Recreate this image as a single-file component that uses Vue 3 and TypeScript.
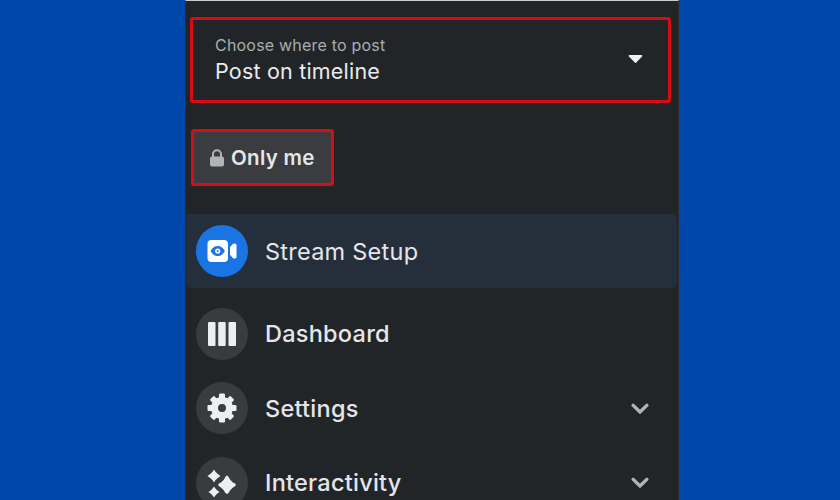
<script setup lang="ts">
interface Item { label: string; icon: string; chevron: boolean; active?: boolean }
const items: Item[] = [
  { label: 'Stream Setup', icon: 'video', chevron: false, active: true },
  { label: 'Dashboard', icon: 'bars', chevron: false },
  { label: 'Settings', icon: 'gear', chevron: true },
  { label: 'Interactivity', icon: 'spark', chevron: true },
]
const gearTeeth = [0, 45, 90, 135, 180, 225, 270, 315]
</script>

<template>
  <div class="page">
    <main class="panel">
      <section class="picker">
        <div>
          <div class="picker-label">Choose where to post</div>
          <div class="picker-value">Post on timeline</div>
        </div>
        <svg class="caret" width="15" height="10" viewBox="0 0 15 10">
          <path d="M1.6 1h11.8c.9 0 1.3 1 .7 1.6L8.3 8.6c-.4.4-1.1.4-1.5 0L.9 2.6C.3 2 .7 1 1.6 1z" fill="#f0f1f3" />
        </svg>
      </section>

      <div class="privacy">
        <svg width="16" height="18" viewBox="0 0 16 18">
          <path d="M4 8V5.2a4 4 0 0 1 8 0V8" fill="none" stroke="#b0b3b8" stroke-width="2" />
          <rect x="1" y="7.5" width="14" height="10" rx="2" fill="#b0b3b8" />
        </svg>
        <span>Only me</span>
      </div>

      <nav class="menu">
        <div v-for="item in items" :key="item.label" class="row" :class="{ active: item.active }">
          <span class="circle">
            <svg v-if="item.icon === 'video'" width="30" height="24" viewBox="0 0 30 24">
              <rect x="0.500" y="1" width="20.500" height="22" rx="4" fill="#fff" />
              <path d="M3.500 12c2-3.500 4.200-5 7.200-5s5.200 1.500 7.200 5c-2 3.500-4.200 5-7.200 5s-5.200-1.500-7.200-5z" fill="#1b74e4" />
              <circle cx="10.700" cy="12" r="2.600" fill="#fff" />
              <circle cx="10.700" cy="12" r="1" fill="#1b74e4" />
              <path d="M23 8.200l2.800-3.100c1-1.100 3.700-.8 3.700 1v11.800c0 1.800-2.700 2.100-3.700 1L23 15.800z" fill="#fff" />
            </svg>
            <svg v-else-if="item.icon === 'bars'" width="30" height="24" viewBox="0 0 30 24">
              <rect x="1" width="7.500" height="24" rx="1" fill="#eceef0" />
              <rect x="11.200" width="7.500" height="24" rx="1" fill="#eceef0" />
              <rect x="21.500" width="7.500" height="24" rx="1" fill="#eceef0" />
            </svg>
            <svg v-else-if="item.icon === 'gear'" width="30" height="30" viewBox="0 0 30 30">
              <rect v-for="a in gearTeeth" :key="a" x="12" y="0.500" width="6" height="6" rx="1.200" fill="#eceef0" :transform="`rotate(${a} 15 15)`" />
              <circle cx="15" cy="15" r="7.500" fill="none" stroke="#eceef0" stroke-width="7" />
            </svg>
            <svg v-else width="30" height="30" viewBox="0 0 30 30">
              <path d="M20 7.500c.8.600 1.300 1 1.900 1.900 1.400 2.800 3.200 4.600 6.100 6.200 1 .7 1 2 0 2.700-2.900 1.600-4.700 3.400-6.100 6.200-.6.900-1.100 1.300-1.900 1.300s-1.300-.4-1.900-1.300c-1.400-2.800-3.200-4.600-6.100-6.200-1-.7-1-2 0-2.700 2.900-1.600 4.700-3.400 6.100-6.200.6-.9 1.100-1.900 1.900-1.900z" fill="#eceef0" />
              <path d="M7 1.500c1.500 2.700 3.500 4.700 6.500 6.500-3 1.800-5 3.800-6.500 6.500C5.500 11.800 3.500 9.800.5 8 3.500 6.200 5.500 4.200 7 1.500z" fill="#eceef0" />
              <path d="M7 18.500c1.300 2.300 3 3.900 5.500 5.500-2.500 1.600-4.200 3.200-5.500 5.500-1.300-2.300-3-3.900-5.500-5.500 2.500-1.600 4.200-3.200 5.500-5.500z" fill="#eceef0" />
            </svg>
          </span>
          <span class="label">{{ item.label }}</span>
          <svg v-if="item.chevron" class="chevron" width="18" height="12" viewBox="0 0 18 12">
            <path d="M2.200 2.400 9 9l6.800-6.600" fill="none" stroke="#b0b3b8" stroke-width="3.400" stroke-linecap="round" stroke-linejoin="round" />
          </svg>
        </div>
      </nav>
    </main>
  </div>
</template>

<style scoped>
.page {
  box-sizing: border-box;
  width: 840px;
  height: 500px;
  padding-left: 185px;
  overflow: hidden;
  background: #0047ab;
  font-family: Inter, Roboto, "Liberation Sans", sans-serif;
  display: flex;
}
.panel {
  box-sizing: border-box;
  width: 494px;
  height: 500px;
  padding: 17px 2px 0 4px;
  background: #222527;
  border-top: 1px solid #c9cccf;
  border-left: 1px solid #2f2b2a;
  border-right: 1px solid #2f2b2a;
  overflow: hidden;
}
.picker {
  box-sizing: border-box;
  width: 481px;
  height: 86px;
  margin-top: -1px;
  padding: 0 25px 0 22px;
  border: 3px solid #d70c14;
  border-radius: 3px;
  display: flex;
  align-items: center;
  justify-content: space-between;
}
.picker-label {
  font-size: 16px;
  line-height: 21px;
  margin-bottom: 1px;
  color: #a9adb2;
  letter-spacing: 0.2px;
}
.picker-value {
  font-size: 21.500px;
  line-height: 28px;
  color: #e8eaed;
  letter-spacing: 0.2px;
}
.caret {
  margin-bottom: 2px;
}
.privacy {
  box-sizing: border-box;
  width: 143px;
  height: 57px;
  margin: 26px 0 28px 1px;
  padding-left: 15px;
  display: flex;
  align-items: center;
  gap: 6px;
  background: #3a3c3f;
  border: 3px solid #d70c14;
  border-radius: 3px;
  font-size: 20.500px;
  font-weight: 600;
  color: #e4e6eb;
  letter-spacing: 0.3px;
}
.menu {
  margin-left: -4px;
  width: 491px;
  display: flex;
  flex-direction: column;
}
.row {
  box-sizing: border-box;
  height: 74.500px;
  padding: 0 28px 0 10px;
  display: flex;
  align-items: center;
  gap: 17px;
}
.row.active {
  height: 74px;
  margin-bottom: 8.500px;
  background: #252f3c;
  border-radius: 0 6px 6px 6px;
}
.circle {
  flex: none;
  width: 52px;
  height: 52px;
  border-radius: 50%;
  background: #3a3b3e;
  display: flex;
  align-items: center;
  justify-content: center;
}
.active .circle {
  background: #1b74e4;
}
.label {
  flex: 1;
  font-size: 23.500px;
  font-weight: 500;
  color: #e4e6eb;
  letter-spacing: 0.25px;
}
.active .label {
  font-weight: 400;
}
.chevron {
  margin-top: 1px;
}
</style>
